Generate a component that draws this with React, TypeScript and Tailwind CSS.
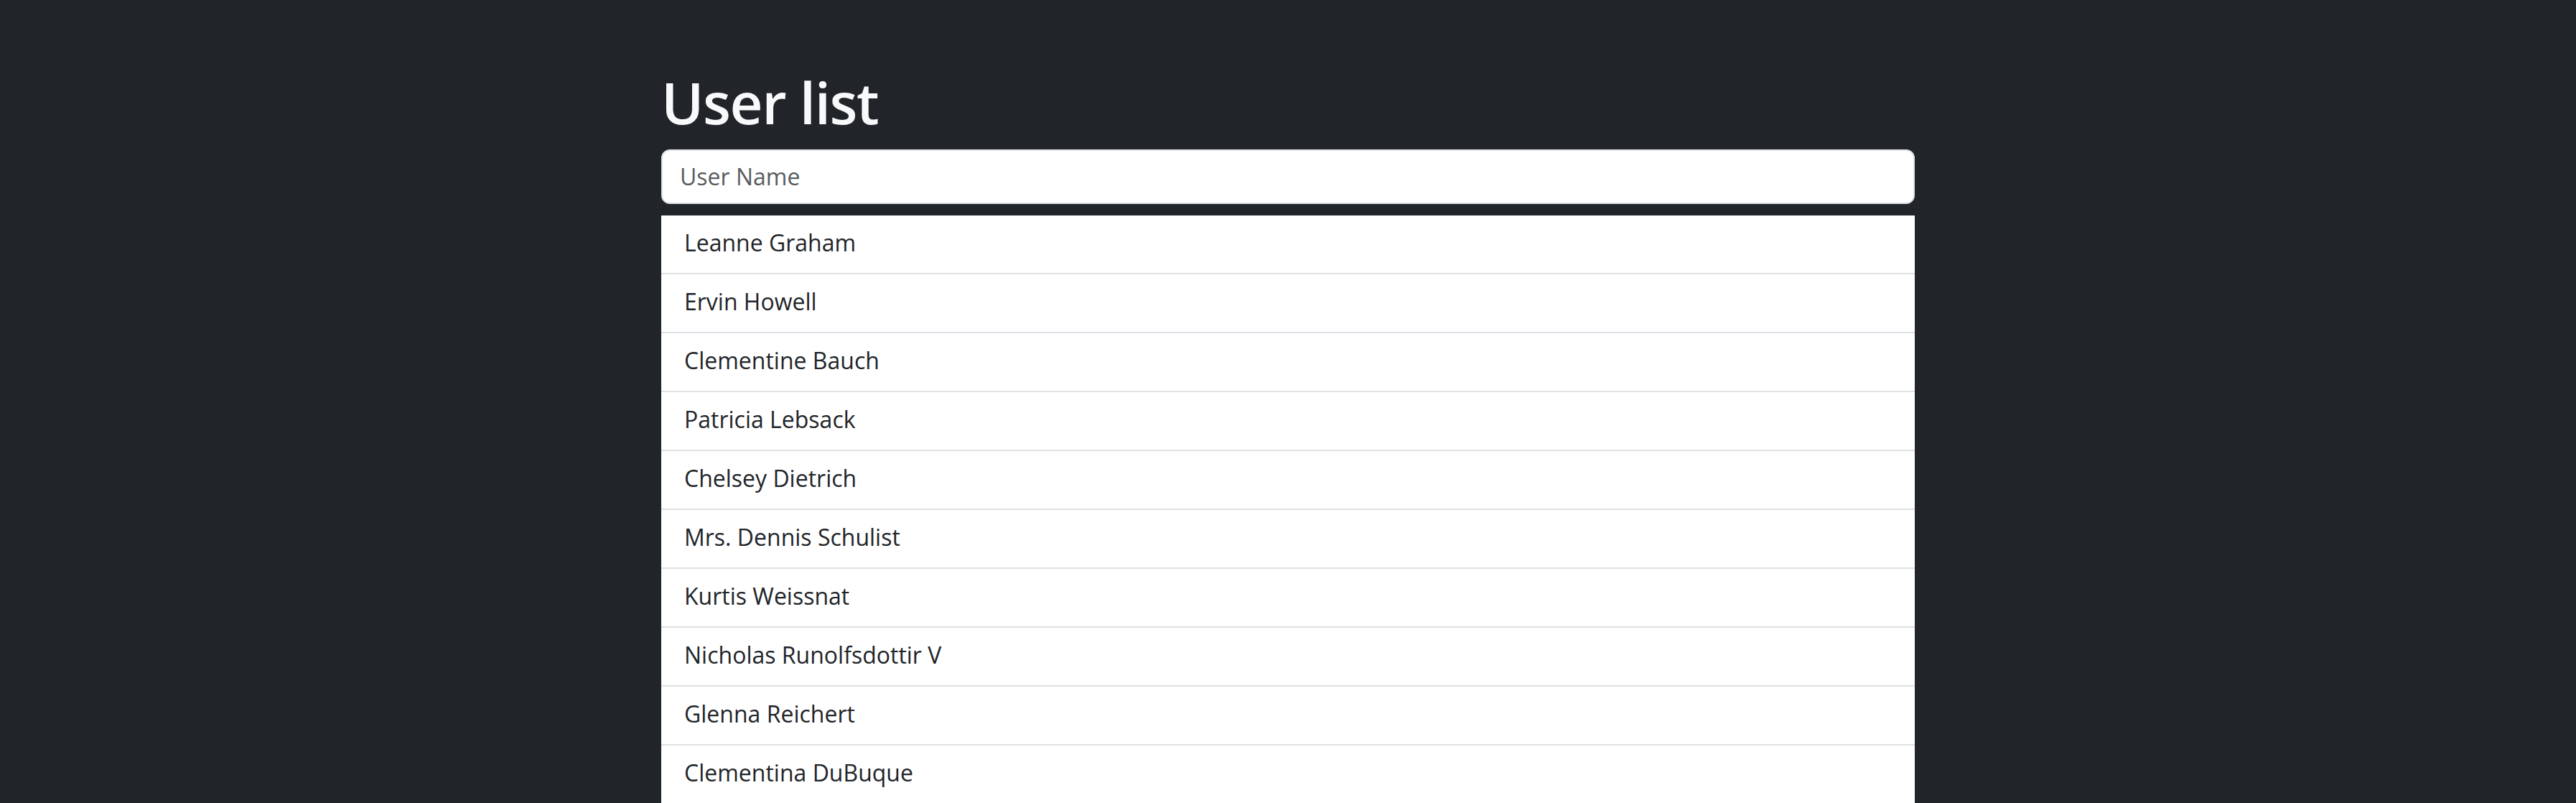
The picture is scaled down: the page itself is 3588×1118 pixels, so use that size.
const users = [
  'Leanne Graham',
  'Ervin Howell',
  'Clementine Bauch',
  'Patricia Lebsack',
  'Chelsey Dietrich',
  'Mrs. Dennis Schulist',
  'Kurtis Weissnat',
  'Nicholas Runolfsdottir V',
  'Glenna Reichert',
  'Clementina DuBuque',
]

export default function App() {
  return (
    <div className="min-h-screen bg-[#212529] font-['Open_Sans',sans-serif]">
      <div className="mx-auto w-[1746px] pt-[94px]">
        <h1 className="mb-[18px] text-[80px] leading-[96px] font-semibold tracking-[-1.4px] text-[#f8f9fa]">User list</h1>
        <input
          type="text"
          placeholder="User Name"
          className="block h-[76px] w-full rounded-[12px] border-2 border-[#dee2e6] bg-white px-[24px] pb-[2px] text-[32px] text-[#212529] outline-none placeholder:text-[#595c5f]"
        />
        <ul className="mt-[16px] bg-white">
          {users.map((name) => (
            <li key={name} className="border-b-2 border-[#dee2e6] px-[32px] pt-[14px] pb-[18px] text-[32px] leading-[48px] text-[#212529]">
              {name}
            </li>
          ))}
        </ul>
      </div>
    </div>
  )
}
